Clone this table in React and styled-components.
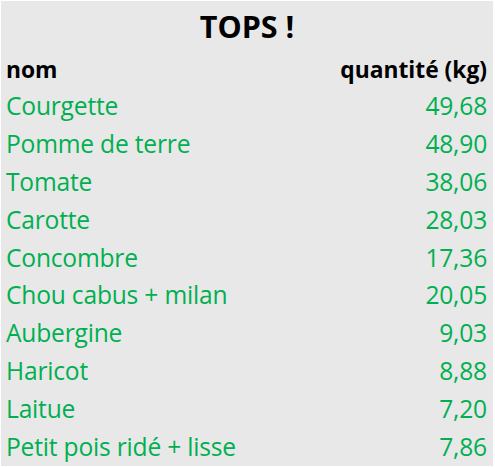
import React from 'react'
import styled, { createGlobalStyle } from 'styled-components'

const Global = createGlobalStyle`
    body {
        margin: 0;
        background: #ffffff;
        font-family: "Open Sans", "Liberation Sans", sans-serif;
    }
`

const Sheet = styled.div`
    margin: 1px;
    width: 492px;
    height: 465px;
    background: #e8e8e8;
    display: flex;
    flex-direction: column;
`

const Title = styled.div`
    height: 50px;
    display: flex;
    align-items: center;
    justify-content: center;
    font-size: 30.5px;
    font-weight: 700;
    color: #000;
`

const Row = styled.div`
    height: ${p => p.$h || 37.8}px;
    display: flex;
    align-items: center;
    justify-content: space-between;
    padding: 0 6px 0 5px;
    font-size: ${p => p.$head ? 22.8 : 24.6}px;
    font-weight: ${p => p.$head ? 700 : 400};
    letter-spacing: ${p => p.$head ? 0 : -0.2}px;
    color: ${p => p.$head ? '#000' : '#00b050'};
`

const produits = [
    ['Courgette', '49,68'],
    ['Pomme de terre', '48,90'],
    ['Tomate', '38,06'],
    ['Carotte', '28,03'],
    ['Concombre', '17,36'],
    ['Chou cabus + milan', '20,05'],
    ['Aubergine', '9,03'],
    ['Haricot', '8,88'],
    ['Laitue', '7,20'],
    ['Petit pois ridé + lisse', '7,86'],
]

export default function App() {
    return (
        <Sheet>
            <Global />
            <Title>TOPS !</Title>
            <Row $head $h={36}>
                <span>nom</span>
                <span>quantité (kg)</span>
            </Row>
            {produits.map(([nom, qte]) => (
                <Row key={nom}>
                    <span>{nom}</span>
                    <span>{qte}</span>
                </Row>
            ))}
        </Sheet>
    )
}
